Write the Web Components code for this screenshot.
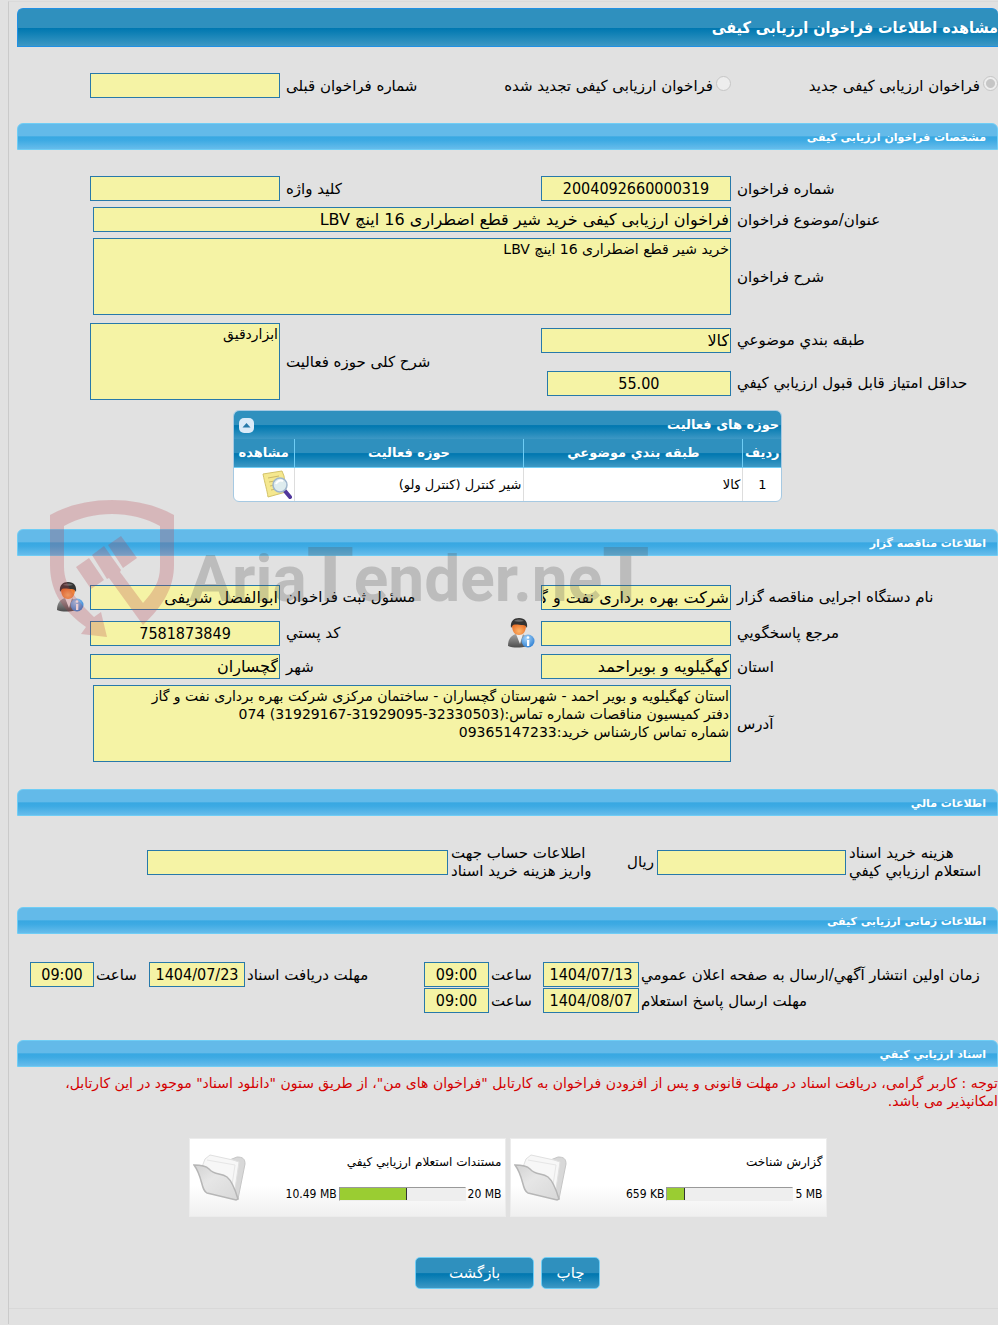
<!DOCTYPE html>
<html lang="fa" dir="rtl">
<head>
<meta charset="utf-8">
<title>مشاهده اطلاعات فراخوان ارزیابی کیفی</title>
<style>
  body {
    margin: 0;
    background: #e1e1e1;
    color: #000;
    font: 15px/18px "DejaVu Sans", sans-serif;
    overflow-x: hidden;
  }
</style>
</head>
<body>
<tender-page></tender-page>

<script>
/* Styles communs : dégradé des barres foncées */
const DARK_BAR = 'linear-gradient(180deg, #2f90be 0, #2f90be 50%, #0077b0 52%, #0f80b5 65%, #3d98c4 100%)';

/**
 * <tender-section heading="...">
 * Barre bleu clair + contenu
 */
class TenderSection extends HTMLElement {
  connectedCallback() {
    this.attachShadow({ mode: 'open' }).innerHTML = `
      <style>
        :host { display: block; }
        h2 {
          margin: 0;
          box-sizing: border-box;
          height: 27px;
          padding: 0 11px;
          border: 1px solid #6fcdf5;
          border-radius: 6px 6px 0 0;
          background: linear-gradient(180deg, #63bae9 0, #63bae9 46%, #38a8e2 52%, #3daae3 65%, #66bceb 100%);
          color: #fff;
          font-size: 11px;
          line-height: 27px;
        }
        .content { padding: 26px 0 27px; }
        :host([roomy]) .content { padding: 28px 0 27px; }
        :host([tight]) .content { padding: 7px 0 0; }
      </style>
      <h2>${this.getAttribute('heading')}</h2>
      <div class="content"><slot></slot></div>
    `;
  }
}
customElements.define('tender-section', TenderSection);

/**
 * <form-row> : grille d'une ligne du formulaire
 * layout : "main" (par défaut), "money" ou "time"
 */
class FormRow extends HTMLElement {
  connectedCallback() {
    this.attachShadow({ mode: 'open' }).innerHTML = `
      <style>
        :host {
          display: grid;
          grid-template-columns:
            minmax(0, 261fr) minmax(0, 190fr) minmax(0, 249fr) minmax(0, 190fr) minmax(0, 67fr);
          column-gap: 6px;
          align-items: center;
        }
        :host(:not(:last-of-type)) { margin-bottom: 6px; }
        :host([layout="money"]) {
          grid-template-columns:
            minmax(0, 149fr) minmax(0, 189fr) minmax(0, 203fr) minmax(0, 301fr) minmax(0, 127fr);
          column-gap: 3px;
        }
        :host([layout="time"]) {
          grid-template-columns:
            minmax(0, 357fr) minmax(0, 96fr) minmax(0, 50fr) minmax(0, 65fr) minmax(0, 175fr)
            minmax(0, 96fr) minmax(0, 51fr) minmax(0, 64fr) minmax(0, 11fr);
          column-gap: 2px;
        }
        :host([layout="time"]:not(:last-of-type)) { margin-bottom: 1px; }
      </style>
      <slot></slot>
    `;
  }
}
customElements.define('form-row', FormRow);

/**
 * <form-field label value kind="input|area" center short wide unit>
 * Le host est en display: contents, label et champ sont
 * donc des cellules de la grille du <form-row>.
 */
class FormField extends HTMLElement {
  connectedCallback() {
    const value = this.getAttribute('value') || '';
    const unit = this.getAttribute('unit');
    const control = this.getAttribute('kind') === 'area'
      ? `<textarea id="control" readonly>${value}</textarea>`
      : `<input id="control" type="text" value="${value}" readonly>`;

    this.attachShadow({ mode: 'open' }).innerHTML = `
      <style>
        :host { display: contents; }
        .label {
          display: flex;
          justify-content: flex-end;
          align-items: center;
        }
        label {
          direction: rtl;
          text-align: left;
          white-space: pre-line;
        }
        .unit, ::slotted(*) { margin-inline-end: auto; }
        input, textarea {
          box-sizing: border-box;
          width: 100%;
          margin: 0;
          padding: 0 1px;
          border: 1px solid #2779aa;
          border-radius: 0;
          background: #f5f3a5;
          color: #000;
          outline: none;
        }
        input {
          display: block;
          height: 25px;
          font: 16px/23px "DejaVu Sans", sans-serif;
        }
        textarea {
          display: block;
          height: 77px;
          resize: none;
          overflow: hidden;
          padding: 1px;
          font: inherit;
          font-size: 14px;
        }
        :host([center]) input {
          font-family: "DejaVu Sans Condensed", "DejaVu Sans", sans-serif;
          text-align: center;
        }
        :host([short]) input { width: 97%; }
        :host([wide]) .control { grid-column: span 3; margin-inline-end: 3px; }
      </style>
      <div class="label">
        ${unit ? `<span class="unit">${unit}</span>` : ''}
        <slot name="before"></slot>
        <label for="control">${this.getAttribute('label')}</label>
      </div>
      <div class="control">${control}</div>
    `;
  }
}
customElements.define('form-field', FormField);

/** <radio-option label checked> */
class RadioOption extends HTMLElement {
  connectedCallback() {
    this.attachShadow({ mode: 'open' }).innerHTML = `
      <style>
        :host { display: block; white-space: nowrap; }
        label { display: flex; align-items: center; gap: 3px; }
        input {
          appearance: none;
          box-sizing: border-box;
          flex: none;
          width: 15px;
          height: 15px;
          margin: 0 0 4px;
          border: 1px solid #c6c6c6;
          border-radius: 50%;
          background: #ededed;
        }
        input:checked { background: radial-gradient(circle, #c6c6c6 0 4px, #ededed 5px); }
      </style>
      <label><input type="radio" name="kind" disabled ${this.hasAttribute('checked') ? 'checked' : ''}>${this.getAttribute('label')}</label>
    `;
  }
}
customElements.define('radio-option', RadioOption);

/** <person-icon> : buste + pastille "i" */
class PersonIcon extends HTMLElement {
  connectedCallback() {
    this.attachShadow({ mode: 'open' }).innerHTML = `
      <style>
        :host { display: block; flex: none; width: 28px; height: 30px; }
        svg { display: block; }
      </style>
      <svg width="28" height="30" viewBox="0 0 28 30" aria-hidden="true">
        <defs>
          <linearGradient id="suit" x1="0" y1="0" x2="0" y2="1">
            <stop offset="0" stop-color="#a5a5a5"/><stop offset="1" stop-color="#4c4c4c"/>
          </linearGradient>
          <radialGradient id="face" cx=".5" cy=".7" r=".7">
            <stop offset="0" stop-color="#ffb56a"/><stop offset="1" stop-color="#e4631b"/>
          </radialGradient>
          <radialGradient id="info" cx=".4" cy=".3" r=".8">
            <stop offset="0" stop-color="#a7d5fa"/><stop offset="1" stop-color="#2277cf"/>
          </radialGradient>
        </defs>
        <path d="M1 28 C1 20 5 17 9 16 L15 16 C19 17 20 21 20 28 C14 30 6 30 1 28Z" fill="url(#suit)"/>
        <path d="M9 16 L13 26 L16 16Z" fill="#eee"/>
        <path d="M5 7 C5 3 19 3 19 7 C19 14 16 17 12 17 C8 17 5 14 5 7Z" fill="url(#face)"/>
        <path d="M4 10 C3 3 7 0 12 0 C18 0 21 4 20 10 C19 8 18 7 16 7 C12 7 9 6 6 7Z" fill="#333"/>
        <path d="M7 3 C10 1 14 1 17 3 C14 4 10 4 7 3Z" fill="#6b6b6b"/>
        <circle cx="21" cy="23" r="6.5" fill="url(#info)"/>
        <circle cx="21" cy="19.500" r="1.300" fill="#fff"/>
        <path d="M20 22 h2.300 v6 h-2.300z" fill="#fff"/>
      </svg>
    `;
  }
}
customElements.define('person-icon', PersonIcon);

/** <activity-table> : tableau des domaines d'activité */
class ActivityTable extends HTMLElement {
  connectedCallback() {
    this.attachShadow({ mode: 'open' }).innerHTML = `
      <style>
        :host {
          display: block;
          box-sizing: border-box;
          width: 56%;
          margin: 10px auto 0;
          border: 1px solid #a6c9e2;
          border-radius: 6px;
          overflow: hidden;
          background: #fff;
        }
        header {
          display: flex;
          justify-content: space-between;
          align-items: center;
          height: 28px;
          padding: 0 2px 0 5px;
          background: ${DARK_BAR};
          color: #fff;
          font-weight: bold;
          font-size: 13px;
        }
        button {
          width: 15px;
          height: 15px;
          padding: 0;
          border: 0;
          border-radius: 5px;
          background: #dbeaf8;
        }
        svg { display: block; }
        table { width: 100%; border-collapse: collapse; table-layout: fixed; }
        th {
          height: 28px;
          padding: 0;
          border-bottom: 1px solid #6fcdf5;
          background: ${DARK_BAR};
          color: #fff;
          font-size: 13px;
          line-height: 26px;
        }
        th + th { border-right: 1px solid #6fcdf5; }
        td { height: 33px; padding: 0 2px; font-size: 13px; }
        td + td { border-right: 1px solid #ddd; }
        td:first-child { text-align: center; }
      </style>
      <header>
        <span>حوزه های فعالیت</span>
        <button type="button" aria-label="بستن جدول">
          <svg width="15" height="15" viewBox="0 0 15 15"><path d="M3.500 9.500 L7.500 5 L11.500 9.500Z" fill="#2779aa"/></svg>
        </button>
      </header>
      <table>
        <colgroup>
          <col style="width: 7%"><col style="width: 40%"><col style="width: 42%"><col>
        </colgroup>
        <thead>
          <tr><th>ردیف</th><th>طبقه بندي موضوعي</th><th>حوزه فعالیت</th><th>مشاهده</th></tr>
        </thead>
        <tbody>
          <tr>
            <td>1</td><td>کالا</td><td>شیر کنترل (کنترل ولو)</td>
            <td>
              <svg width="32" height="30" viewBox="0 0 32 30" aria-hidden="true">
                <path d="M3 4 L22 1 L24 6 L26 22 L8 27 C7 20 5 14 3 4Z" fill="#f5e88f" stroke="#d4c36a"/>
                <path d="M8 8 L19 6 M9 12 L17 10.500 M10 16 L15 15 M11 20 L16 19" stroke="#cdb968" fill="none"/>
                <path d="M25 21 L30 27" stroke="#51379b" stroke-width="4" stroke-linecap="round"/>
                <circle cx="20" cy="15" r="7" fill="#dcecf8" fill-opacity=".9" stroke="#9fb6cc" stroke-width="1.500"/>
                <path d="M16 14 C17 11 20 10 23 11" stroke="#fff" stroke-width="2" fill="none"/>
              </svg>
            </td>
          </tr>
        </tbody>
      </table>
    `;
  }
}
customElements.define('activity-table', ActivityTable);

/** <file-card name used total percent> */
class FileCard extends HTMLElement {
  connectedCallback() {
    this.attachShadow({ mode: 'open' }).innerHTML = `
      <style>
        :host {
          display: flex;
          justify-content: space-between;
          align-items: center;
          box-sizing: border-box;
          flex: 0 1 317px;
          height: 79px;
          padding: 0 3px;
          border: 1px solid #ececec;
          background: linear-gradient(180deg, #fff 60%, #f0f0f0 100%);
          font-size: 12px;
          line-height: 16px;
        }
        .info { display: flex; flex-direction: column; gap: 16px; }
        .usage {
          display: flex;
          align-items: center;
          gap: 2px;
          font-family: "DejaVu Sans Condensed", "DejaVu Sans", sans-serif;
        }
        progress {
          appearance: none;
          direction: ltr;
          box-sizing: border-box;
          width: 127px;
          height: 14px;
          border: 1px solid #999;
          border-right-color: #eee;
          border-bottom-color: #eee;
          background: #eee;
        }
        progress::-webkit-progress-bar { background: #eee; }
        progress::-webkit-progress-value { background: #9acd32; border-right: 1px solid #333; }
        svg { flex: none; }
      </style>
      <div class="info">
        <label for="usage">${this.getAttribute('name')}</label>
        <div class="usage">
          <bdi>${this.getAttribute('total')}</bdi>
          <progress id="usage" max="100" value="${this.getAttribute('percent')}"></progress>
          <bdi>${this.getAttribute('used')}</bdi>
        </div>
      </div>
      <svg width="54" height="50" viewBox="0 0 54 50" aria-hidden="true">
        <defs>
          <linearGradient id="front" x1="0" y1="0" x2="1" y2="1">
            <stop offset="0" stop-color="#d2d2d2"/><stop offset=".4" stop-color="#e6e6e6"/><stop offset="1" stop-color="#d8d8d8"/>
          </linearGradient>
        </defs>
        <path d="M34 8 L44 4 C50 4 52 6 52 11 L45 46 L38 36Z" fill="#d8d8d8" stroke="#c6c6c6"/>
        <path d="M9 14 L12 6 L17 2 L40 7 L46 9 L42 36 L34 34Z" fill="#f7f7f7" stroke="#e0e0e0"/>
        <path d="M14 7 L42 12 L39 32" fill="none" stroke="#e6e6e6"/>
        <path d="M1 12 C6 12 12 12 16 16 C22 23 28 19 34 24 C39 28 42 36 45 46 L43 47 L14 40 C8 38 10 24 1 12Z" fill="url(#front)" stroke="#b6b6b6" stroke-width="1.500"/>
      </svg>
    `;
  }
}
customElements.define('file-card', FileCard);

/** <action-button> */
class ActionButton extends HTMLElement {
  connectedCallback() {
    this.attachShadow({ mode: 'open' }).innerHTML = `
      <style>
        :host { display: block; }
        button {
          display: block;
          height: 32px;
          min-width: 59px;
          padding: 0 10px;
          border: 1px solid #6fcdf5;
          border-radius: 5px;
          background: ${DARK_BAR};
          color: #fff;
          font: inherit;
        }
        :host([large]) button { min-width: 119px; }
      </style>
      <button type="button"><slot></slot></button>
    `;
  }
}
customElements.define('action-button', ActionButton);

/** <site-watermark> : logo translucide posé par-dessus la page */
class SiteWatermark extends HTMLElement {
  connectedCallback() {
    this.attachShadow({ mode: 'open' }).innerHTML = `
      <style>
        :host {
          position: absolute;
          top: 495px;
          left: 40px;
          direction: ltr;
          pointer-events: none;
        }
        svg { display: block; }
        text { font-family: Roboto, sans-serif; font-weight: bold; }
      </style>
      <svg width="620" height="150" viewBox="0 0 620 150">
        <path fill="#b93c46" opacity=".25" d="M10 20 C45 0 99 0 134 20 L134 70 C134 92 124 110 103 130 L69 83 L67 84 L52 60 L64 51 L81 75 L80 77 L103 108 C114 96 120 86 120 72 L120 31 C92 15 52 15 24 31 L24 72 C24 92 38 106 54 122 L61 117 L67 142 L41 139 L46 132 C24 116 10 98 10 70Z
          M36 72 L49 63 L64 85 L51 94Z
          M68 50 L81 41 L97 63 L83 73Z"/>
        <text x="149" y="106" font-size="64" fill="#505050" opacity=".25">Aria<tspan font-size="76">T</tspan>ender.ne<tspan font-size="76">T</tspan></text>
      </svg>
    `;
  }
}
customElements.define('site-watermark', SiteWatermark);

/** <tender-page> : page complète */
class TenderPage extends HTMLElement {
  connectedCallback() {
    this.attachShadow({ mode: 'open' }).innerHTML = `
      <style>
        :host { display: block; position: relative; padding-top: 1px; }
        main {
          margin-left: 8px;
          padding: 6px 0 0 8px;
          border-left: 1px solid #cacaca;
          border-top: 1px solid #dadada;
        }
        h1 {
          margin: 0;
          box-sizing: border-box;
          height: 39px;
          border: 1px solid #2090e4;
          border-right: 0;
          border-radius: 6px 6px 0 0;
          background: ${DARK_BAR};
          color: #fff;
          font: bold 16px/37px "DejaVu Sans Condensed", "DejaVu Sans", sans-serif;
        }
        .kind { padding: 26px 0 25px; }
        .pair {
          display: grid;
          grid-template-columns: minmax(0, 457fr) minmax(0, 518fr);
          column-gap: 6px;
          align-items: center;
          margin-top: 8px;
        }
        .narrow, .rest { display: grid; column-gap: 6px; align-items: center; }
        .narrow {
          grid-template-columns: minmax(0, 261fr) minmax(0, 190fr);
          row-gap: 18px;
        }
        .rest { grid-template-columns: minmax(0, 249fr) minmax(0, 190fr) minmax(0, 67fr); }
        .notice { margin: 0; color: #d40000; font-size: 14px; }
        .files { display: flex; justify-content: center; gap: 4px; padding: 28px 0 40px; }
        .actions { display: flex; justify-content: center; gap: 7px; }
        footer { height: 15px; margin: 19px 0 0 -8px; border-top: 1px solid #d8d8d8; }
      </style>
      <main>
        <h1>مشاهده اطلاعات فراخوان ارزیابی کیفی</h1>
        <div class="kind">
          <form-row>
            <radio-option label="فراخوان ارزیابی کیفی جدید" checked></radio-option>
            <radio-option label="فراخوان ارزیابی کیفی تجدید شده"></radio-option>
            <form-field label="شماره فراخوان قبلی"></form-field>
          </form-row>
        </div>

        <tender-section heading="مشخصات فراخوان ارزیابی کیفی">
          <form-row>
            <form-field label="شماره فراخوان" value="2004092660000319" center></form-field>
            <form-field label="کلید واژه"></form-field>
          </form-row>
          <form-row>
            <form-field label="عنوان/موضوع فراخوان" value="فراخوان ارزیابی کیفی خرید شیر قطع اضطراری 16 اینچ LBV" wide></form-field>
          </form-row>
          <form-row>
            <form-field label="شرح فراخوان" kind="area" value="خرید شیر قطع اضطراری 16 اینچ LBV" wide></form-field>
          </form-row>
          <div class="pair">
            <div class="narrow">
              <form-field label="طبقه بندي موضوعي" value="کالا"></form-field>
              <form-field label="حداقل امتیاز قابل قبول ارزیابي کیفي" value="55.00" center short></form-field>
            </div>
            <div class="rest">
              <form-field label="شرح کلی حوزه فعالیت" kind="area" value="ابزاردقیق"></form-field>
            </div>
          </div>
          <activity-table></activity-table>
        </tender-section>

        <tender-section heading="اطلاعات مناقصه گزار">
          <form-row>
            <form-field label="نام دستگاه اجرایی مناقصه گزار" value="شرکت بهره برداری نفت و گاز گچساران"></form-field>
            <form-field label="مسئول ثبت فراخوان" value="ابوالفضل شریفی"></form-field>
            <person-icon></person-icon>
          </form-row>
          <form-row>
            <form-field label="مرجع پاسخگویي"></form-field>
            <form-field label="کد پستي" value="7581873849" center><person-icon slot="before"></person-icon></form-field>
          </form-row>
          <form-row>
            <form-field label="استان" value="کهگیلویه و بویراحمد"></form-field>
            <form-field label="شهر" value="گچساران"></form-field>
          </form-row>
          <form-row>
            <form-field label="آدرس" kind="area" value="استان کهگیلویه و بویر احمد - شهرستان گچساران - ساختمان مرکزی شرکت بهره برداری نفت و گاز
دفتر کمیسیون مناقصات شماره تماس:(32330503-31929095-31929167) 074
شماره تماس کارشناس خرید:09365147233" wide></form-field>
          </form-row>
        </tender-section>

        <tender-section heading="اطلاعات مالي" roomy>
          <form-row layout="money">
            <form-field label="هزینه خرید اسناد
استعلام ارزیابي کیفي"></form-field>
            <form-field unit="ریال" label="اطلاعات حساب جهت
واریز هزینه خرید اسناد"></form-field>
          </form-row>
        </tender-section>

        <tender-section heading="اطلاعات زمانی ارزیابی کیفی" roomy>
          <form-row layout="time">
            <form-field label="زمان اولین انتشار آگهي/ارسال به صفحه اعلان عمومي" value="1404/07/13" center></form-field>
            <form-field label="ساعت" value="09:00" center></form-field>
            <form-field label="مهلت دریافت اسناد" value="1404/07/23" center></form-field>
            <form-field label="ساعت" value="09:00" center></form-field>
          </form-row>
          <form-row layout="time">
            <form-field label="مهلت ارسال پاسخ استعلام" value="1404/08/07" center></form-field>
            <form-field label="ساعت" value="09:00" center></form-field>
          </form-row>
        </tender-section>

        <tender-section heading="اسناد ارزیابي کیفي" tight>
          <p class="notice">توجه : کاربر گرامی، دریافت اسناد در مهلت قانونی و پس از افزودن فراخوان به کارتابل "فراخوان های من"، از طریق ستون "دانلود اسناد" موجود در این کارتابل،<br>امکانپذیر می باشد.</p>
          <div class="files">
            <file-card name="گزارش شناخت" total="5 MB" used="659 KB" percent="14"></file-card>
            <file-card name="مستندات استعلام ارزیابي کیفي" total="20 MB" used="10.49 MB" percent="54"></file-card>
          </div>
          <div class="actions">
            <action-button>چاپ</action-button>
            <action-button large>بازگشت</action-button>
          </div>
        </tender-section>
        <footer></footer>
      </main>
      <site-watermark></site-watermark>
    `;
  }
}
customElements.define('tender-page', TenderPage);
</script>
</body>
</html>
